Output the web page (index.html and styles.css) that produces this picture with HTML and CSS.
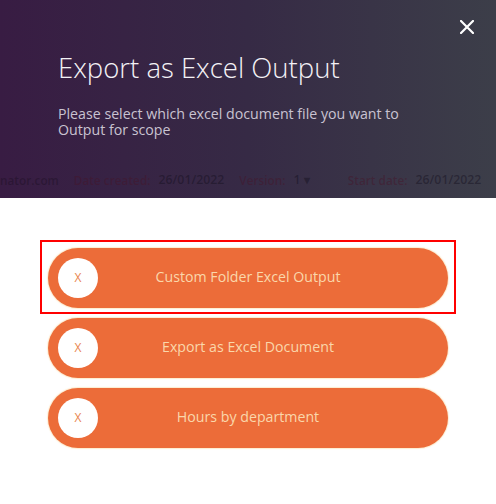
FILE: index.html
```html
<!DOCTYPE html>
<html lang="en">
<head>
    <meta charset="UTF-8">
    <meta name="viewport" content="width=device-width, initial-scale=1.0">
    <title>Export as Excel Output</title>
    <link rel="stylesheet" href="styles.css">
</head>
<body>

<div id="export-modal">
    <div id="modal-header">
        <button id="closeModal">
            <svg width="14" height="14" viewBox="0 0 14 14"><path d="M1 1L13 13M13 1L1 13" stroke="#fff" stroke-width="2.2" stroke-linecap="square"/></svg>
        </button>
        <h1 class="modal-title">Export as Excel Output</h1>
        <p class="modal-subtitle">Please select which excel document file you want to<br>Output for scope</p>
        <div class="behind-row">
            <span class="dim-strong">nator.com</span>
            <span class="dim-label">Date created:</span>
            <span class="dim-value">26/01/2022</span>
            <span class="dim-label gap">Version:</span>
            <span class="dim-value">1 &#9662;</span>
            <span class="dim-label gap-wide">Start date:</span>
            <span class="dim-value">26/01/2022</span>
        </div>
    </div>

    <div id="option-list">
        <button class="option focused"><span class="option-icon">X</span><span class="option-text">Custom Folder Excel Output</span></button>
        <button class="option"><span class="option-icon">X</span><span class="option-text">Export as Excel Document</span></button>
        <button class="option"><span class="option-icon">X</span><span class="option-text">Hours by department</span></button>
    </div>
</div>

</body>
</html>
```

FILE: styles.css
```css
body {
    font-family: 'Open Sans', 'Noto Sans', sans-serif;
    margin: 0;
    background-color: #ffffff;
}
#export-modal {
    width: 496px;
    height: 504px;
    display: flex;
    flex-direction: column;
}
#modal-header {
    position: relative;
    height: 198px;
    box-sizing: border-box;
    padding: 50px 0 0 58px;
    background: linear-gradient(90deg, #381c43, #362a45 50%, #3c3e49);
    color: white;
    overflow: hidden;
}
#closeModal {
    position: absolute;
    top: 20px;
    right: 22px;
    background: none;
    border: none;
    padding: 0;
    cursor: pointer;
}
.modal-title {
    margin: 0;
    font-size: 27.5px;
    font-weight: 300;
    line-height: 36px;
    color: #f4f2f6;
}
.modal-subtitle {
    margin: 20px 0 0;
    font-size: 14.2px;
    line-height: 16px;
    color: #c9c3d1;
}
.behind-row {
    display: flex;
    align-items: center;
    margin: 33px 0 0 -58px;
    font-size: 11.8px;
    font-weight: 600;
    white-space: nowrap;
}
.dim-strong {
    color: rgba(20, 10, 25, 0.35);
    margin-right: 15px;
}
.dim-label {
    color: rgba(70, 20, 40, 0.45);
    margin-right: 8px;
}
.dim-value {
    color: rgba(20, 15, 30, 0.45);
    font-size: 12.3px;
}
.gap {
    margin-left: 15px;
}
.gap-wide {
    margin-left: 38px;
}
#option-list {
    display: flex;
    flex-direction: column;
    gap: 10px;
    padding: 50px 48px 0;
}
.option {
    position: relative;
    display: flex;
    align-items: center;
    justify-content: center;
    height: 60px;
    border: none;
    border-radius: 30px;
    background-color: #ec6c39;
    box-shadow: 0 0 1px 1px rgba(248, 200, 120, 0.35);
    cursor: pointer;
    font-family: inherit;
}
.option.focused::after {
    content: '';
    position: absolute;
    top: -8px;
    bottom: -6px;
    left: -8px;
    right: -8px;
    border: 2px solid #ff0000;
}
.option-icon {
    position: absolute;
    left: 10px;
    top: 10px;
    width: 40px;
    height: 40px;
    border-radius: 50%;
    background-color: #ffffff;
    color: #e9864f;
    font-size: 12px;
    line-height: 40px;
    text-align: center;
}
.option-text {
    font-size: 14.2px;
    color: #fad7ab;
    margin-top: -4px;
}
```
